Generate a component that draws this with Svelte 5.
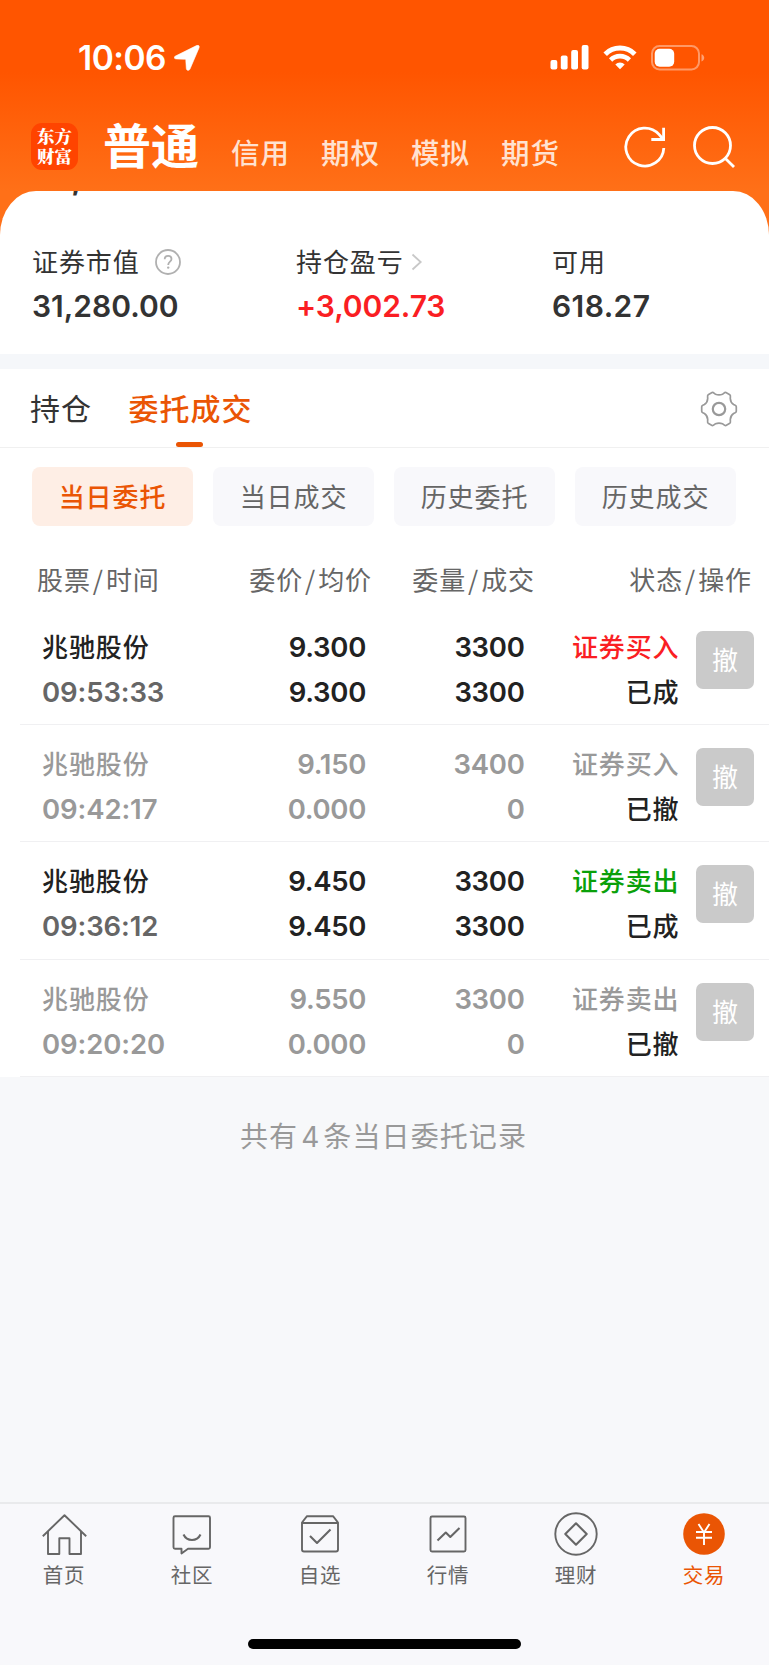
<script>
  let accountTypes = ['信用', '期权', '模拟', '期货'];
  let filters = ['当日委托', '当日成交', '历史委托', '历史成交'];
  let activeFilter = '当日委托';

  let columns = [
    ['股票', '时间'],
    ['委价', '均价'],
    ['委量', '成交'],
    ['状态', '操作']
  ];

  let orders = [
    { name: '兆驰股份', time: '09:53:33', price: '9.300', avg: '9.300', qty: '3300', filled: '3300', side: '证券买入', type: 'buy', status: '已成' },
    { name: '兆驰股份', time: '09:42:17', price: '9.150', avg: '0.000', qty: '3400', filled: '0', side: '证券买入', type: 'cancelled', status: '已撤' },
    { name: '兆驰股份', time: '09:36:12', price: '9.450', avg: '9.450', qty: '3300', filled: '3300', side: '证券卖出', type: 'sell', status: '已成' },
    { name: '兆驰股份', time: '09:20:20', price: '9.550', avg: '0.000', qty: '3300', filled: '0', side: '证券卖出', type: 'cancelled', status: '已撤' }
  ];

  let navItems = [
    { id: 'home', label: '首页' },
    { id: 'community', label: '社区' },
    { id: 'watchlist', label: '自选' },
    { id: 'market', label: '行情' },
    { id: 'wealth', label: '理财' },
    { id: 'trade', label: '交易' }
  ];
  let activeNav = 'trade';
</script>

<div class="page">
  <div class="top">
    <div class="status-bar">
      <span class="clock">10:06</span>
      <svg class="location" width="26" height="26" viewBox="0 0 26 26">
        <path d="M1.500 11 22.500.6c2-.9 3.300.4 2.500 2.300L16 24c-.9 2.100-3.500 1.700-3.700-.6l-.5-8.100c0-.7-.3-1-1-1L2.200 13.900c-2.300-.1-2.700-2-.7-2.900z" fill="#fff" stroke="#fff" stroke-width="0.600" />
      </svg>
      <svg class="signal" width="39" height="25" viewBox="0 0 39 25" fill="#fff">
        <rect x="0.500" y="15" width="6.800" height="9.500" rx="2" />
        <rect x="10.800" y="10.500" width="6.800" height="14" rx="2" />
        <rect x="21.200" y="5" width="6.800" height="19.500" rx="2" />
        <rect x="31.700" y="0" width="6.800" height="24.500" rx="2" />
      </svg>
      <svg class="wifi" width="34" height="25" viewBox="0 0 34 25" fill="none" stroke="#fff" stroke-width="5">
        <path d="M2.200 9.200a21 21 0 0 1 29.600 0" />
        <path d="M7.600 15a13.300 13.300 0 0 1 18.800 0" stroke-width="4.600" />
        <path d="M17 24.300l-4.700-4.800a6.700 6.700 0 0 1 9.400 0z" fill="#fff" stroke="none" />
      </svg>
      <svg class="battery" width="54" height="26" viewBox="0 0 54 26">
        <rect x="1" y="1" width="47" height="23.500" rx="7.500" fill="none" stroke="#fff" stroke-opacity="0.400" stroke-width="2" />
        <path d="M50.500 9.200v7.200c1.800-.6 2.700-2 2.700-3.600s-.9-3-2.700-3.600z" fill="#fff" fill-opacity="0.450" />
        <rect x="3.700" y="3.800" width="19.500" height="18" rx="5" fill="#fff" />
      </svg>
    </div>

    <div class="nav-header">
      <div class="logo">东方<br />财富</div>
      <span class="title">普通</span>
      <div class="types">
        {#each accountTypes as type}
          <span>{type}</span>
        {/each}
      </div>
      <svg class="refresh" width="42" height="42" viewBox="0 0 42 42" fill="none" stroke="#fff" stroke-width="2.800">
        <path d="M39.800 22A19 19 0 1 1 35 8.400L39 13" />
        <path d="M39.600 1.800V13.500H27.300" />
      </svg>
      <svg class="search" width="42" height="42" viewBox="0 0 42 42" fill="none" stroke="#fff" stroke-width="2.800">
        <circle cx="19.500" cy="19.500" r="18" />
        <path d="M32.200 32.200L41 41" />
      </svg>
    </div>

    <div class="summary">
      <div class="scrolled">,</div>
      <div class="stat">
        <div class="stat-label">
          证券市值
          <svg class="help" width="26" height="26" viewBox="0 0 26 26" fill="none" stroke="#b0b0b0">
            <circle cx="13" cy="13" r="12" stroke-width="1.800" />
            <path d="M9.700 10.200c0-2 1.400-3.400 3.400-3.400s3.400 1.300 3.400 3.100c0 2.700-3.300 2.800-3.300 6" stroke-width="1.800" />
            <circle cx="13.200" cy="18.600" r="1.200" fill="#b0b0b0" stroke="none" />
          </svg>
        </div>
        <div class="stat-value">31,280.00</div>
      </div>
      <div class="stat">
        <div class="stat-label">
          持仓盈亏
          <svg class="chevron" width="12" height="18" viewBox="0 0 12 18" fill="none" stroke="#c8c8c8" stroke-width="1.800">
            <path d="M1.500 1.500L9.700 9l-8.200 7.500" />
          </svg>
        </div>
        <div class="stat-value profit">+3,002.73</div>
      </div>
      <div class="stat">
        <div class="stat-label">可用</div>
        <div class="stat-value available">618.27</div>
      </div>
    </div>
  </div>

  <div class="tabs">
    <span class="tab">持仓</span>
    <span class="tab active">委托成交</span>
    <svg class="gear" width="38" height="38" viewBox="-19 -19 38 38" fill="none" stroke="#999">
      <path
        d="M-7-16.500C-5.500-17-5-15.700-3.500-14.800Q0-13.300 3.500-14.800C5-15.700 5.500-17 7-16.500L10.800-14.300C12-13.500 11.200-12 11.300-10.500Q11.500-6.500 14.600-4.500C16-3.700 17.300-3.800 17.300-2.200V2.200C17.300 3.800 16 3.700 14.600 4.500Q11.500 6.500 11.300 10.500C11.200 12 12 13.500 10.800 14.300L7 16.500C5.500 17 5 15.700 3.500 14.800Q0 13.300-3.500 14.800C-5 15.700-5.500 17-7 16.500L-10.800 14.300C-12 13.500-11.200 12-11.300 10.500Q-11.500 6.500-14.600 4.500C-16 3.700-17.300 3.800-17.300 2.200V-2.200C-17.300-3.800-16-3.700-14.600-4.500Q-11.500-6.500-11.300-10.500C-11.200-12-12-13.500-10.800-14.300Z"
        stroke-width="1.700"
      />
      <circle r="6.200" stroke-width="2.200" />
    </svg>
  </div>

  <div class="orders">
    <div class="filters">
      {#each filters as filter}
        <span class="filter" class:active={filter === activeFilter}>{filter}</span>
      {/each}
    </div>

    <div class="table-head">
      {#each columns as [first, second]}
        <span>{first}<i>/</i>{second}</span>
      {/each}
    </div>

    {#each orders as order}
      <div class="row {order.type}">
        <div class="cell name">
          <span>{order.name}</span>
          <span class="time">{order.time}</span>
        </div>
        <div class="cell number">
          <span>{order.price}</span>
          <span>{order.avg}</span>
        </div>
        <div class="cell number">
          <span>{order.qty}</span>
          <span>{order.filled}</span>
        </div>
        <div class="cell state">
          <span class="side">{order.side}</span>
          <span class="status">{order.status}</span>
        </div>
        <span class="cancel">撤</span>
      </div>
    {/each}
  </div>

  <div class="total">共有<b>4</b>条当日委托记录</div>

  <div class="bottom">
    <nav>
      {#each navItems as item}
        <div class="nav-item" class:active={item.id === activeNav}>
          <svg width="46" height="46" viewBox="0 0 46 46" fill="none" stroke="#666" stroke-width="1.900" stroke-linejoin="round">
            {#if item.id === 'home'}
              <path d="M1.800 25.200L23.500 4.200 45.200 25.200M7 20.500V43h11.300V27.300h10.200V43H40V20.500" />
            {:else if item.id === 'community'}
              <path d="M6 5.200h33.500q1.500 0 1.500 1.500v29.500q0 1.500-1.500 1.500H19L12.500 42.500V37.700H6q-1.500 0-1.500-1.500V6.700q0-1.500 1.500-1.500z" />
              <path d="M14.500 23.500c3.500 7.300 13.500 7.300 17 0" stroke-width="2.100" />
            {:else if item.id === 'watchlist'}
              <path d="M5 11.500L10 5.200h26L41 11.500V38.500q0 2-2 2H7q-2 0-2-2zM5 12h36" />
              <path d="M13 25l7 7 13.500-13.500" stroke-width="2.100" />
            {:else if item.id === 'market'}
              <rect x="5.500" y="5.500" width="35" height="35" rx="1.500" />
              <path d="M12.500 29.500l8.300-8 4.500 4.500L34.500 17" stroke-width="2.100" />
            {:else if item.id === 'wealth'}
              <circle cx="23" cy="23" r="20.700" />
              <path d="M23 12.300L33.700 23 23 33.700 12.300 23z" stroke-width="2.100" />
            {:else}
              <circle cx="23" cy="23" r="20.800" fill="#ea5504" stroke="none" />
              <path d="M17.500 13L23 21.500l5.500-8.500M23 21.500v12.500M15 21h16M15 26.700h16" stroke="#fff" stroke-width="1.900" />
            {/if}
          </svg>
          <span>{item.label}</span>
        </div>
      {/each}
    </nav>
    <div class="home-indicator"></div>
  </div>
</div>

<style>
  :global(body) {
    margin: 0;
  }

  .page {
    display: flex;
    flex-direction: column;
    width: 769px;
    height: 1665px;
    overflow: hidden;
    background: #f7f8fa;
    color: #333;
    font-family: Inter, 'Noto Sans CJK SC', sans-serif;
    white-space: nowrap;
  }

  .page svg {
    display: block;
    flex: none;
  }

  .top {
    background: linear-gradient(#ff5500 0, #ff5500 72px, #ff7018 191px);
  }

  .status-bar {
    display: flex;
    align-items: center;
    box-sizing: border-box;
    height: 115px;
    padding: 0 64px 0 78px;
  }

  .clock {
    color: #fff;
    font-size: 33.500px;
    font-weight: 600;
    letter-spacing: -0.500px;
  }

  .location {
    margin-left: 8px;
  }

  .signal {
    margin-left: auto;
  }

  .wifi {
    margin: 0 14px;
  }

  .nav-header {
    display: flex;
    align-items: center;
    box-sizing: border-box;
    height: 76px;
    padding: 0 34px 13px 31px;
  }

  .logo {
    box-sizing: border-box;
    width: 47px;
    height: 47px;
    padding-top: 3px;
    border-radius: 11px;
    background: #ff4400;
    color: #fff;
    font-family: 'Noto Serif CJK SC', 'Noto Sans CJK SC', serif;
    font-size: 17.500px;
    font-weight: 900;
    line-height: 19.500px;
    text-align: center;
  }

  .title {
    margin-left: 25px;
    color: #fff;
    font-size: 48px;
    font-weight: 700;
    line-height: 62px;
  }

  .types {
    display: flex;
    gap: 31px;
    margin-top: 15px;
    margin-left: 32px;
    color: #ffe2d1;
    font-size: 28.500px;
    font-weight: 500;
    letter-spacing: 1px;
    line-height: 40px;
  }

  .refresh {
    margin-left: auto;
  }

  .search {
    margin-left: 27px;
  }

  .summary {
    position: relative;
    display: grid;
    grid-template-columns: 264px 256px 1fr;
    box-sizing: border-box;
    height: 163px;
    padding: 49px 0 0 32px;
    border-radius: 36px 36px 0 0 / 44px 44px 0 0;
    background: #fff;
  }

  /* Tail of the total amount, scrolled under the header */
  .scrolled {
    position: absolute;
    top: 0;
    left: 71px;
    display: flex;
    align-items: flex-end;
    height: 5px;
    overflow: hidden;
    font-size: 36px;
    font-weight: 600;
    line-height: 40px;
  }

  .stat-label {
    display: flex;
    align-items: center;
    height: 40px;
    font-size: 26px;
    letter-spacing: 0.900px;
  }

  .help {
    margin-top: 4px;
    margin-left: 15px;
  }

  .chevron {
    margin-top: 4px;
    margin-left: 7px;
  }

  .stat-value {
    height: 48px;
    margin-top: 2px;
    font-size: 30px;
    font-weight: 600;
    line-height: 48px;
  }

  .profit {
    color: #fa1e23;
    letter-spacing: -0.100px;
  }

  .available {
    letter-spacing: 0.400px;
  }

  .tabs {
    display: flex;
    align-items: center;
    box-sizing: border-box;
    height: 94px;
    padding: 0 31px 0 30px;
    border-top: 15px solid #f5f7fa;
    border-bottom: 1px solid #f0f0f0;
    background: #fff;
    font-size: 30px;
    letter-spacing: 1px;
  }

  .tab {
    position: relative;
    margin-right: 36.500px;
    padding-top: 2px;
    line-height: 76px;
  }

  .tab.active {
    color: #ea5504;
    font-weight: 500;
  }

  .tab.active::after {
    content: '';
    position: absolute;
    bottom: 0;
    left: 47px;
    width: 27px;
    height: 5px;
    border-radius: 3px;
    background: #ea5504;
  }

  .gear {
    margin-top: 2px;
    margin-left: auto;
  }

  .orders {
    background: #fff;
  }

  .filters {
    display: grid;
    grid-template-columns: repeat(4, 161px);
    gap: 20px;
    padding: 19px 32px 0;
  }

  .filter {
    height: 59px;
    border-radius: 8px;
    background: #f8f8fb;
    color: #666;
    font-size: 26px;
    letter-spacing: 0.900px;
    line-height: 61px;
    text-align: center;
  }

  .filter.active {
    background: #feeee5;
    color: #ea5504;
    font-weight: 500;
  }

  .table-head {
    display: grid;
    grid-template-columns: 172px 163px 163px 217px;
    height: 82px;
    padding: 0 17px 0 37px;
    color: #666;
    font-size: 26px;
    letter-spacing: 0.900px;
    line-height: 105px;
    text-align: right;
  }

  .table-head span:first-child {
    text-align: left;
  }

  .table-head i {
    margin: 0 2px;
    font-family: 'Noto Sans CJK SC', sans-serif;
    font-style: normal;
  }

  .row {
    display: grid;
    grid-template-columns: 140px 184px 158.500px 155px 58px;
    box-sizing: border-box;
    height: 117.200px;
    margin-left: 20px;
    padding: 17px 0 0 22px;
    border-bottom: 1px solid #f0f0f2;
    color: #222;
    font-size: 27.500px;
    font-weight: 500;
  }

  .cell {
    display: flex;
    flex-direction: column;
    text-align: right;
    line-height: 45px;
  }

  .name {
    text-align: left;
  }

  .name span:first-child,
  .state span {
    font-size: 26px;
    letter-spacing: 0.900px;
  }

  .time {
    color: #666;
    font-weight: 600;
    letter-spacing: -0.100px;
  }

  .number {
    font-weight: 600;
    letter-spacing: -0.300px;
  }

  .cancelled,
  .cancelled .time {
    color: #999;
  }

  .buy .side {
    color: #fa1e23;
  }

  .sell .side {
    color: #0aa00a;
  }

  .state .status {
    color: #222;
  }

  .cancel {
    width: 58px;
    height: 58px;
    margin: 6px 0 0 16.500px;
    border-radius: 7px;
    background: #cacaca;
    color: #fff;
    font-size: 26px;
    font-weight: 400;
    line-height: 60px;
    text-align: center;
  }

  .total {
    height: 120px;
    padding-right: 2px;
    color: #999;
    font-size: 28px;
    letter-spacing: 1.100px;
    line-height: 121px;
    text-align: center;
  }

  .total b {
    margin: 0 3px;
    font-weight: 400;
  }

  .bottom {
    display: flex;
    flex-direction: column;
    box-sizing: border-box;
    height: 163px;
    margin-top: auto;
    border-top: 2px solid #e9eaec;
    background: #f8f8fb;
  }

  nav {
    display: grid;
    grid-template-columns: repeat(6, 1fr);
    padding: 7px 1px 0 0;
  }

  .nav-item {
    display: flex;
    flex-direction: column;
    align-items: center;
    color: #666;
    font-size: 20.500px;
    letter-spacing: 0.800px;
  }

  .nav-item span {
    line-height: 37px;
  }

  .nav-item.active {
    color: #ea5504;
  }

  .home-indicator {
    width: 273px;
    height: 10px;
    margin: auto auto 16px;
    border-radius: 5px;
    background: #000;
  }
</style>
